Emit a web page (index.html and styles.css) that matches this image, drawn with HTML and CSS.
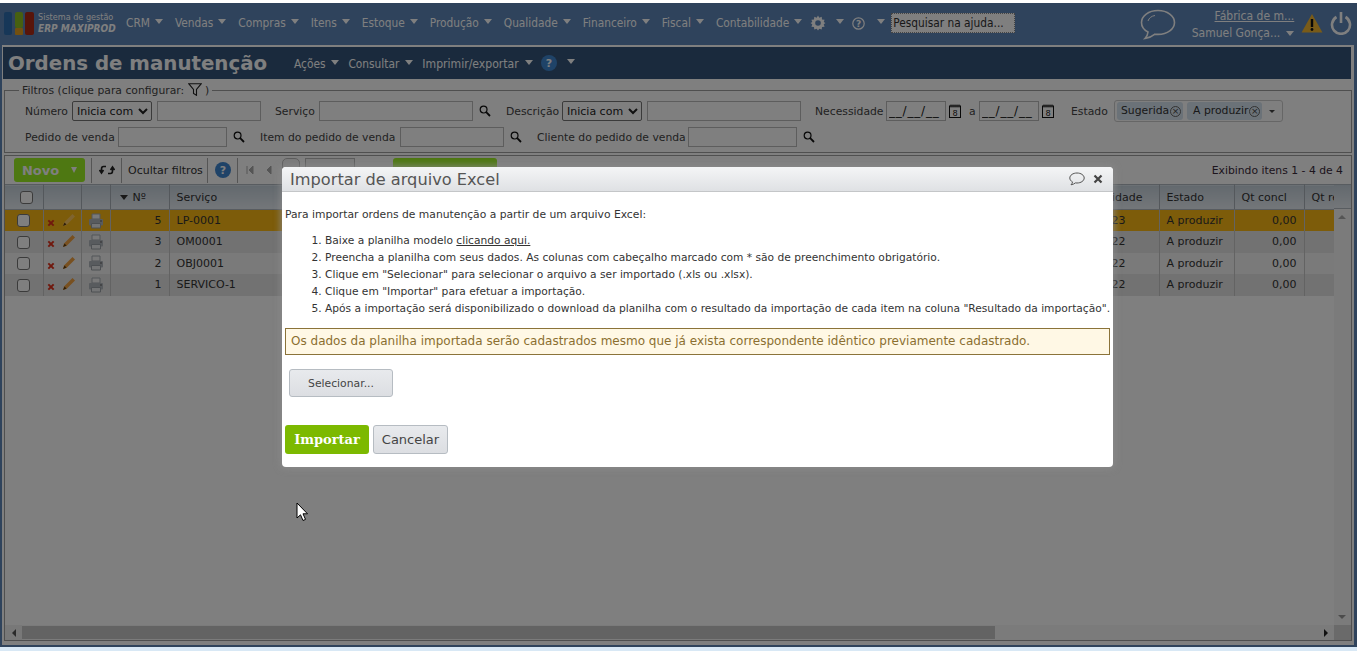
FILE: index.html
```html
<!DOCTYPE html>
<html lang="pt-BR">
<head>
<meta charset="utf-8">
<title>Ordens de manutenção</title>
<link rel="stylesheet" href="styles.css">
</head>
<body>
<svg class="defs" width="0" height="0">
  <defs>
    <symbol id="mag" viewBox="0 0 12 12"><circle cx="4.600" cy="4.600" r="3.400" fill="none" stroke="currentColor" stroke-width="1.200"/><path d="M7.200 7.200 11 11" stroke="currentColor" stroke-width="1.800"/></symbol>
    <symbol id="cal" viewBox="0 0 12 14"><rect x=".5" y="2" width="11" height="11.500" fill="none" stroke="currentColor"/><path d="M2 .5v3M4 .5v3M6 .5v3M8 .5v3M10 .5v3" stroke="currentColor"/><text x="6" y="11.800" font-size="8.500" text-anchor="middle" font-family="Liberation Sans" fill="currentColor">8</text></symbol>
    <symbol id="del" viewBox="0 0 9 9"><path d="M1.500 1.500 7.500 7.500M7.500 1.500 1.500 7.500" stroke="currentColor" stroke-width="2.200"/></symbol>
    <symbol id="pen" viewBox="0 0 14 14"><path d="M1 13 2 9.500 10.500 1 13 3.500 4.500 12Z" fill="currentColor"/><path d="M1 13 2.500 9.500 4.500 11.500Z" fill="#5a3a10"/></symbol>
    <symbol id="print" viewBox="0 0 16 16"><path d="M4 1h8v5H4Z" fill="#f2f2f2" stroke="#a6acb2"/><rect x="1" y="6" width="14" height="6.500" rx="1" fill="#b0b6bc"/><path d="M3.500 10.500h9v4.500h-9Z" fill="#e6e8ea" stroke="#9aa0a6"/><circle cx="13" cy="8" r=".8" fill="#555"/></symbol>
  </defs>
</svg>

<div class="app">
  <header class="topbar">
    <svg class="logo" width="30" height="23" viewBox="0 0 30 23"><rect x="0" y="0" width="8" height="23" rx="2" fill="#2f6fb0"/><rect x="11" y="0" width="8" height="16" rx="2" fill="#8fc020"/><rect x="11" y="16" width="8" height="7" rx="1" fill="#e6a020"/><rect x="21" y="0" width="9" height="23" rx="2" fill="#b02a14"/></svg>
    <div class="brand"><span class="brand-top">Sistema de gestão</span><span class="brand-name">ERP MAXIPROD</span></div>
    <nav class="nav">
      <a class="nav-item">CRM<i class="tri"></i></a>
      <a class="nav-item">Vendas<i class="tri"></i></a>
      <a class="nav-item">Compras<i class="tri"></i></a>
      <a class="nav-item">Itens<i class="tri"></i></a>
      <a class="nav-item">Estoque<i class="tri"></i></a>
      <a class="nav-item">Produção<i class="tri"></i></a>
      <a class="nav-item">Qualidade<i class="tri"></i></a>
      <a class="nav-item">Financeiro<i class="tri"></i></a>
      <a class="nav-item">Fiscal<i class="tri"></i></a>
      <a class="nav-item">Contabilidade<i class="tri"></i></a>
    </nav>
    <svg class="gear" width="16" height="16" viewBox="0 0 16 16"><path d="M8 0.500 9.300 2.700 11.700 1.800 12 4.400 14.600 4.700 13.700 7 15.500 8 13.700 9.300 14.600 11.700 12 12 11.700 14.600 9.300 13.700 8 15.500 6.700 13.700 4.300 14.600 4 12 1.400 11.700 2.300 9.300 0.500 8 2.300 7 1.400 4.700 4 4.400 4.300 1.800 6.700 2.700Z" fill="#fff"/><circle cx="8" cy="8" r="2.800" fill="#5e86b8"/></svg>
    <i class="tri tri-gear"></i>
    <svg class="help" width="13" height="13" viewBox="0 0 13 13"><circle cx="6.500" cy="6.500" r="5.700" fill="none" stroke="#fff" stroke-width="1.200"/><text x="6.500" y="9.800" font-size="9" font-weight="700" text-anchor="middle" font-family="DejaVu Sans" fill="#fff">?</text></svg>
    <i class="tri tri-help"></i>
    <input class="help-search" value="Pesquisar na ajuda..." aria-label="Pesquisar na ajuda">
    <svg class="bubble" width="36" height="31" viewBox="0 0 36 31"><path d="M18 1.500C8.500 1.500 1.500 7 1.500 13.500 1.500 17.500 4 21 8 23 7.800 25.500 6.500 28 5 29.500 9 29 12.500 27.200 15 25.200 16 25.300 17 25.400 18 25.400 27.500 25.400 34.500 20 34.500 13.500 34.500 7 27.500 1.500 18 1.500Z" fill="none" stroke="#fff" stroke-width="1.600"/><path d="M8 12c1-3 3.500-5 7-5.500" fill="none" stroke="#fff"/></svg>
    <div class="user">
      <a class="company">Fábrica de m...</a>
      <span class="user-name">Samuel Gonça...<i class="tri tri-user"></i></span>
    </div>
    <svg class="warn" width="22" height="20" viewBox="0 0 22 20"><path d="M11 1 21.500 19.500H.5Z" fill="#f2b630"/><path d="M11 6v8" stroke="#111" stroke-width="2.400"/><circle cx="11" cy="16.500" r="1.400" fill="#111"/></svg>
    <svg class="power" width="22" height="24" viewBox="0 0 22 24"><path d="M6.500 6A9 9 0 1 0 15.500 6" fill="none" stroke="#fff" stroke-width="2.600"/><path d="M11 1v11" stroke="#fff" stroke-width="2.600"/></svg>
  </header>

  <main class="panel">
    <div class="titlebar">
      <h1 class="page-title">Ordens de manutenção</h1>
      <a class="sub-item">Ações<i class="tri"></i></a>
      <a class="sub-item">Consultar<i class="tri"></i></a>
      <a class="sub-item sub-wide">Imprimir/exportar<i class="tri"></i></a>
      <svg class="round-help" width="16" height="16" viewBox="0 0 16 16"><circle cx="8" cy="8" r="8" fill="#3f86d0"/><text x="8" y="12" font-size="11" font-weight="700" text-anchor="middle" font-family="DejaVu Sans" fill="#fff">?</text></svg>
      <i class="tri tri-sub"></i>
    </div>

    <fieldset class="filters">
      <legend class="filters-legend">Filtros (clique para configurar:
        <svg class="funnel" width="14" height="13" viewBox="0 0 14 13"><path d="M.7.7h12.600L8.500 6.500V12.300L5.500 10.500V6.500Z" fill="none" stroke="#222" stroke-width="1.100"/></svg> )</legend>
      <div class="filter-row">
        <label class="w43">Número</label>
        <select class="sel ml4"><option>Inicia com</option></select>
        <input class="inp w104 ml5">
        <label class="w39 ml14">Serviço</label>
        <input class="inp w154 ml5">
        <svg class="ico-mag ml6"><use href="#mag"/></svg>
        <label class="w52 ml15">Descrição</label>
        <select class="sel ml4"><option>Inicia com</option></select>
        <input class="inp w154 ml5">
        <label class="w66 ml14">Necessidade</label>
        <input class="inp date w60 ml5" value="__/__/__">
        <svg class="ico-cal ml3"><use href="#cal"/></svg>
        <label class="w6 ml8">a</label>
        <input class="inp date w60 ml4" value="__/__/__">
        <svg class="ico-cal ml3"><use href="#cal"/></svg>
        <label class="w37 ml17">Estado</label>
        <div class="multi ml6">
          <span class="chip">Sugerida<i class="chip-x">×</i></span>
          <span class="chip">A produzir<i class="chip-x">×</i></span>
          <i class="tri tri-multi"></i>
        </div>
      </div>
      <div class="filter-row row-two">
        <label class="w89">Pedido de venda</label>
        <input class="inp w109 ml4">
        <svg class="ico-mag ml6"><use href="#mag"/></svg>
        <label class="w135 ml15">Item do pedido de venda</label>
        <input class="inp w104 ml5">
        <svg class="ico-mag ml6"><use href="#mag"/></svg>
        <label class="w147 ml15">Cliente do pedido de venda</label>
        <input class="inp w109 ml4">
        <svg class="ico-mag ml6"><use href="#mag"/></svg>
      </div>
    </fieldset>

    <section class="grid">
      <div class="toolbar">
        <button class="btn-novo">Novo<i class="tri tri-novo"></i></button>
        <span class="tsep s1"></span>
        <svg class="refresh" width="16" height="12" viewBox="0 0 16 12"><path d="M7 2.500H4.500C3 2.500 2.500 3.500 2.500 5V8M.5 6 2.500 9 4.500 6M9 9.500h2.500C13 9.500 13.500 8.500 13.500 7V4M11.500 6l2-3 2 3" fill="none" stroke="#222" stroke-width="1.600"/></svg>
        <span class="tsep s2"></span>
        <span class="hide-filters">Ocultar filtros</span>
        <span class="tsep s3"></span>
        <svg class="round-help-2" width="16" height="16" viewBox="0 0 16 16"><circle cx="8" cy="8" r="8" fill="#3f86d0"/><text x="8" y="12" font-size="11" font-weight="700" text-anchor="middle" font-family="DejaVu Sans" fill="#fff">?</text></svg>
        <span class="tsep s4"></span>
        <svg class="pager" width="27" height="10" viewBox="0 0 27 10"><path d="M1 1v8M7 1 3 5 7 9ZM25 1 21 5 25 9Z" fill="#aaa" stroke="#aaa"/></svg>
        <span class="pager-box"></span>
        <span class="pager-input"></span>
        <span class="gantt"></span>
        <span class="showing">Exibindo itens 1 - 4 de 4</span>
      </div>

      <div class="grid-main">
        <div class="table-wrap">
          <table class="data">
            <colgroup>
              <col class="c-check"><col class="c-act"><col class="c-print"><col class="c-num"><col class="c-serv"><col class="c-need"><col class="c-state"><col class="c-qt"><col class="c-qtr">
            </colgroup>
            <thead>
              <tr>
                <th class="ctr head-check"><span class="cbx"></span></th>
                <th></th>
                <th></th>
                <th class="th-num"><i class="tri tri-sort"></i>Nº</th>
                <th>Serviço</th>
                <th class="need-h">Necessidade</th>
                <th>Estado</th>
                <th>Qt concl</th>
                <th class="clip">Qt realizada</th>
              </tr>
            </thead>
            <tbody>
              <tr class="row-sel">
                <td class="ctr"><span class="cbx"></span></td>
                <td class="acts"><svg class="ico-del"><use href="#del"/></svg><svg class="ico-pen pen-sel"><use href="#pen"/></svg></td>
                <td class="ctr"><svg class="ico-print"><use href="#print"/></svg></td>
                <td class="num">5</td><td>LP-0001</td><td class="need">10/10/2023</td><td>A produzir</td><td class="num">0,00</td><td></td>
              </tr>
              <tr class="row-a">
                <td class="ctr"><span class="cbx"></span></td>
                <td class="acts"><svg class="ico-del"><use href="#del"/></svg><svg class="ico-pen"><use href="#pen"/></svg></td>
                <td class="ctr"><svg class="ico-print"><use href="#print"/></svg></td>
                <td class="num">3</td><td>OM0001</td><td class="need">10/10/2022</td><td>A produzir</td><td class="num">0,00</td><td></td>
              </tr>
              <tr class="row-b">
                <td class="ctr"><span class="cbx"></span></td>
                <td class="acts"><svg class="ico-del"><use href="#del"/></svg><svg class="ico-pen"><use href="#pen"/></svg></td>
                <td class="ctr"><svg class="ico-print"><use href="#print"/></svg></td>
                <td class="num">2</td><td>OBJ0001</td><td class="need">10/10/2022</td><td>A produzir</td><td class="num">0,00</td><td></td>
              </tr>
              <tr class="row-a">
                <td class="ctr"><span class="cbx"></span></td>
                <td class="acts"><svg class="ico-del"><use href="#del"/></svg><svg class="ico-pen"><use href="#pen"/></svg></td>
                <td class="ctr"><svg class="ico-print"><use href="#print"/></svg></td>
                <td class="num">1</td><td>SERVICO-1</td><td class="need">10/10/2022</td><td>A produzir</td><td class="num">0,00</td><td></td>
              </tr>
            </tbody>
          </table>
        </div>
        <div class="vscroll">
          <div class="vscroll-head"></div>
          <div class="vscroll-track"><i class="arr-up"></i><i class="arr-down"></i></div>
        </div>
      </div>

      <div class="hscroll">
        <div class="h-left"><i class="arr-left"></i></div>
        <div class="h-thumb"></div>
        <div class="h-rest"><i class="arr-right"></i></div>
        <div class="h-corner"></div>
      </div>
    </section>
  </main>
</div>
<div class="bottom-strip"></div>

<div class="overlay"></div>

<div class="modal" role="dialog">
  <div class="modal-head">
    <h2 class="modal-title">Importar de arquivo Excel</h2>
    <svg class="modal-chat" width="16" height="14" viewBox="0 0 16 14"><path d="M8 1C4 1 .8 3.200.8 6 .8 7.600 1.800 9 3.500 9.900 3.400 11 2.800 12 2 12.800 3.800 12.600 5.300 11.800 6.400 10.900 6.900 11 7.500 11 8 11 12 11 15.200 8.800 15.200 6 15.200 3.200 12 1 8 1Z" fill="none" stroke="#555" stroke-width="1"/></svg>
    <svg class="modal-close" width="10" height="10" viewBox="0 0 10 10"><path d="M1.500 1.500 8.500 8.500M8.500 1.500 1.500 8.500" stroke="#444" stroke-width="2.200"/></svg>
  </div>
  <div class="modal-body">
    <p class="intro">Para importar ordens de manutenção a partir de um arquivo Excel:</p>
    <ol class="steps">
      <li>Baixe a planilha modelo <a class="link">clicando aqui.</a></li>
      <li>Preencha a planilha com seus dados. As colunas com cabeçalho marcado com * são de preenchimento obrigatório.</li>
      <li>Clique em "Selecionar" para selecionar o arquivo a ser importado (.xls ou .xlsx).</li>
      <li>Clique em "Importar" para efetuar a importação.</li>
      <li>Após a importação será disponibilizado o download da planilha com o resultado da importação de cada item na coluna "Resultado da importação".</li>
    </ol>
    <div class="notice">Os dados da planilha importada serão cadastrados mesmo que já exista correspondente idêntico previamente cadastrado.</div>
    <button class="btn-select">Selecionar...</button>
    <div class="modal-actions">
      <button class="btn-import">Importar</button>
      <button class="btn-cancel">Cancelar</button>
    </div>
  </div>
</div>

<svg class="cursor" width="13" height="20" viewBox="0 0 13 20"><path d="M1 1V16L4.500 12.800 7 18.500 9.500 17.400 7 11.800H11.500Z" fill="#fff" stroke="#000" stroke-width="1"/></svg>
</body>
</html>
```

FILE: styles.css
```css
* { box-sizing: border-box; }
html, body { margin: 0; padding: 0; height: 651px; overflow: hidden; }
body { background: #fff; font-family: "DejaVu Sans", sans-serif; font-size: 10.800px; color: #444; position: relative; }
.defs { position: absolute; }
i { font-style: normal; }

.app { margin-top: 3px; height: 644px; background: #5e86b8; display: flex; flex-direction: column; }
.bottom-strip { height: 4px; background: #d8e8f5; }
.overlay { position: absolute; left: 0; top: 3px; width: 1357px; height: 644px; background: rgba(0,0,0,.5); }

.tri { display: inline-block; width: 0; height: 0; border-left: 4px solid transparent; border-right: 4px solid transparent; border-top: 5px solid #fff; }

/* top bar */
.topbar { height: 42px; flex: none; display: flex; align-items: center; color: #fff; padding-bottom: 2px; }
.logo { margin-left: 4px; flex: none; }
.brand { margin-left: 4px; width: 88px; display: flex; flex-direction: column; font-family: "DejaVu Sans Condensed", "DejaVu Sans", sans-serif; }
.brand-top { font-size: 9px; line-height: 11px; }
.brand-name { font-size: 10px; line-height: 12px; font-style: italic; font-weight: 700; }
.nav { display: flex; }
.nav-item { display: flex; align-items: center; font-size: 11.800px; font-family: "DejaVu Sans Condensed", "DejaVu Sans", sans-serif; margin-right: 6px; white-space: nowrap; }
.nav-item .tri { margin: 0 6px 3px 5px; }
.gear { margin-left: -4px; flex: none; }
.tri-gear { margin: 0 0 4px 10px; }
.help { margin-left: 8px; flex: none; }
.tri-help { margin: 0 0 4px 12px; }
.help-search { margin-left: 6px; width: 124px; height: 20px; flex: none; background: #fff; border: 1px dotted #888; padding: 0 1px; font: 11.800px "DejaVu Sans Condensed", "DejaVu Sans", sans-serif; color: #333; }
.bubble { margin: 2px 0 0 125px; flex: none; }
.user { width: 103px; margin-left: 15px; flex: none; display: flex; flex-direction: column; align-items: flex-end; font-size: 12px; font-family: "DejaVu Sans Condensed", "DejaVu Sans", sans-serif; line-height: 17px; margin-top: 3px; }
.company { text-decoration: underline; }
.user-name { display: flex; align-items: center; white-space: nowrap; }
.tri-user { margin-left: 6px; }
.warn { margin-left: 7px; flex: none; }
.power { margin-left: 7px; flex: none; }

/* panel */
.panel { flex: 1; margin: 0 3px 2px 2px; padding: 2px 3px 0 1px; background: #fff; display: flex; flex-direction: column; min-height: 0; }
.titlebar { height: 32px; flex: none; background: #34547a; display: flex; align-items: center; color: #fff; }
.page-title { margin: 0 25px 0 5px; width: 261px; font: 700 19.800px "DejaVu Sans", sans-serif; white-space: nowrap; }
.sub-item { display: flex; align-items: center; font: 11.800px "DejaVu Sans Condensed", "DejaVu Sans", sans-serif; white-space: nowrap; padding-top: 1px; }
.sub-item .tri { margin: 0 9px 3px 6px; }
.sub-wide { font-size: 12.100px; }
.round-help { margin-left: -1px; flex: none; }
.tri-sub { margin: 0 0 3px 10px; }

.filters { margin: 4px -1px 0 1px; padding: 0 0 0 20px; height: 70px; border: 1px solid #9f9f9f; flex: none; min-width: 0; }
.filters-legend { margin-left: -6px; padding: 0 3px; font-size: 10.800px; line-height: 13px; color: #444; }
.funnel { vertical-align: -2px; }
.filter-row { display: flex; align-items: center; height: 20px; margin-top: 4px; white-space: nowrap; color: #444; }
.row-two { margin-top: 6px; }
.filter-row label { flex: none; }
.inp { height: 20px; border: 1px solid #bbb; background: #fff; flex: none; padding: 0 2px; font: 11px "DejaVu Sans", sans-serif; color: #222; }
.date { font-size: 12px; letter-spacing: .8px; }
.sel { width: 80px; height: 20px; border: 1px solid #777; border-radius: 2px; background: #fff; flex: none; font: 11px "DejaVu Sans", sans-serif; color: #222; padding: 0; }
.ico-mag { width: 12px; height: 12px; flex: none; color: #111; }
.ico-cal { width: 12px; height: 14px; flex: none; color: #111; }
.w6 { width: 6px; } .w37 { width: 37px; } .w39 { width: 39px; } .w43 { width: 43px; } .w52 { width: 52px; }
.w60 { width: 60px; } .w66 { width: 66px; } .w89 { width: 89px; } .w104 { width: 104px; } .w109 { width: 109px; }
.w135 { width: 135px; } .w147 { width: 147px; } .w154 { width: 154px; }
.ml3 { margin-left: 3px; } .ml4 { margin-left: 4px; } .ml5 { margin-left: 5px; } .ml6 { margin-left: 6px; } .ml8 { margin-left: 8px; }
.ml14 { margin-left: 14px; } .ml15 { margin-left: 15px; } .ml17 { margin-left: 17px; }
.multi { width: 169px; height: 22px; border: 1px solid #ccc; border-radius: 3px; background: #fff; display: flex; align-items: center; padding-left: 2px; gap: 4px; flex: none; }
.chip { background: #d6e4f0; border-radius: 3px; height: 18px; line-height: 18px; padding: 0 2px 0 4px; color: #333; display: flex; align-items: center; gap: 1px; }
.chip + .chip { padding-left: 6px; }
.chip-x { width: 11px; height: 11px; border: 1px solid #666; border-radius: 50%; font-size: 9px; line-height: 9px; text-align: center; color: #444; }
.tri-multi { border-top-color: #444; margin-left: 3px; border-left-width: 3px; border-right-width: 3px; border-top-width: 3px; }

/* grid */
.grid { margin: 2px -1px 0 1px; height: 486px; border: 1px solid #9f9f9f; display: flex; flex-direction: column; flex: none; background: #fff; }
.toolbar { height: 28px; flex: none; display: flex; align-items: center; color: #333; }
.btn-novo { margin-left: 9px; width: 71px; height: 24px; background: #9cf024; border: 0; border-radius: 3px; font: 700 13px "DejaVu Sans", sans-serif; color: #fff; display: flex; align-items: center; justify-content: center; gap: 12px; padding: 0; }
.tri-novo { border-left-width: 3px; border-right-width: 3px; border-top-width: 6px; }
.tsep { width: 1px; height: 25px; background: #aaa; flex: none; }
.s1 { margin-left: 6px; }
.refresh { margin-left: 7px; flex: none; }
.s2 { margin-left: 6px; }
.hide-filters { margin-left: 6px; width: 79px; white-space: nowrap; font-size: 11px; }
.s3 { margin-left: 0; }
.round-help-2 { margin-left: 7px; flex: none; }
.s4 { margin-left: 6px; }
.pager { margin-left: 8px; flex: none; }
.pager-box { margin-left: 9px; width: 18px; height: 24px; border: 1px solid #bbb; border-radius: 5px; background: #f4f4f4; }
.pager-input { margin-left: 5px; width: 50px; height: 24px; border: 1px solid #bbb; background: #f4f4f4; }
.gantt { margin-left: 38px; width: 104px; height: 24px; background: #9cf024; border-radius: 3px; }
.showing { margin-left: auto; margin-right: 8px; color: #3a2a3a; }

.grid-main { flex: 1; min-height: 0; display: flex; }
.table-wrap { width: 1329px; flex: none; overflow: hidden; }
.data { width: 1329px; table-layout: fixed; border-collapse: collapse; font-size: 11px; color: #333; }
.c-check { width: 38px; } .c-act { width: 38px; } .c-print { width: 29px; } .c-num { width: 59px; } .c-serv { width: 881px; }
.c-need { width: 109px; } .c-state { width: 75px; } .c-qt { width: 70px; } .c-qtr { width: 30px; }
.data th { height: 25px; padding: 0 0 0 7px; font-weight: 400; text-align: left; background: linear-gradient(#c6d2dc, #e8eef4); border-right: 1px solid #a8b0b8; border-top: 1px solid #b0b8c0; border-bottom: 1px solid #b0b8c0; white-space: nowrap; overflow: hidden; }
.data td { height: 21.500px; padding: 0 0 0 7px; border-right: 1px solid #c6c6c6; white-space: nowrap; overflow: hidden; }
.data .ctr { text-align: center; padding: 0; }
.data .head-check { padding-left: 6px; }
.data .num { text-align: right; padding: 0 7px 0 0; }
.data .th-num { padding-left: 9px; }
.tri-sort { border-top-color: #333; margin-right: 5px; vertical-align: 1px; }
.data .need-h { text-align: right; padding-right: 16px; }
.data .need { text-align: right; padding-right: 33px; }
.row-sel td { background: #fab814; }
.row-a td { background: #e4e4e4; }
.row-b td { background: #f4f4f4; }
.cbx { display: inline-block; width: 13px; height: 13px; border: 1px solid #777; border-radius: 3px; background: #fff; vertical-align: middle; }
.data .acts { padding-left: 3px; }
.ico-del { width: 8px; height: 8px; color: #e0301a; vertical-align: -2px; }
.ico-pen { width: 14px; height: 14px; margin-left: 7px; color: #f0a040; vertical-align: -2px; }
.pen-sel { color: #ffc860; }
.ico-print { width: 16px; height: 16px; vertical-align: middle; }

.vscroll { width: 17px; flex: none; display: flex; flex-direction: column; }
.vscroll-head { height: 25px; flex: none; background: linear-gradient(#c6d2dc, #e8eef4); border-top: 1px solid #b0b8c0; border-bottom: 1px solid #b0b8c0; }
.vscroll-track { flex: 1; background: #f6f6f6; position: relative; }
.arr-up, .arr-down { position: absolute; left: 4px; width: 0; height: 0; border-left: 4px solid transparent; border-right: 4px solid transparent; }
.arr-up { top: 6px; border-bottom: 4px solid #aaa; }
.arr-down { bottom: 6px; border-top: 4px solid #999; }

.hscroll { height: 15px; flex: none; display: flex; background: #f6f6f6; }
.h-left { width: 17px; display: flex; align-items: center; justify-content: center; background: #f0f0f0; }
.h-thumb { width: 973px; background: #c6c6c6; margin: 1px 0; }
.h-rest { flex: 1; display: flex; align-items: center; justify-content: flex-end; padding-right: 6px; }
.arr-left { width: 0; height: 0; border-top: 4px solid transparent; border-bottom: 4px solid transparent; border-right: 4px solid #555; }
.arr-right { width: 0; height: 0; border-top: 4px solid transparent; border-bottom: 4px solid transparent; border-left: 4px solid #222; }
.h-corner { width: 17px; background: #d4d4d4; }

/* modal */
.modal { position: absolute; left: 282px; top: 167px; width: 831px; height: 300px; background: #fff; border-radius: 4px; box-shadow: 0 0 6px 2px rgba(140,140,140,.7); display: flex; flex-direction: column; }
.modal-head { height: 25px; flex: none; display: flex; align-items: center; background: linear-gradient(#f4f5f6, #dfe1e4); border-bottom: 1px solid #c4c6c8; border-radius: 4px 4px 0 0; padding: 0 10px 0 8px; }
.modal-title { margin: 0; font: 400 16.200px "DejaVu Sans", sans-serif; color: #555; flex: 1; white-space: nowrap; }
.modal-close { margin-left: 8px; }
.modal-body { flex: 1; padding: 0 3px; font-size: 10.700px; color: #333; display: flex; flex-direction: column; align-items: flex-start; }
.intro { margin: 16px 0 0; line-height: 14px; font-size: 10.750px; }
.steps { margin: 10px 0 0; padding: 0 0 0 40px; line-height: 17px; white-space: nowrap; font-size: 10.670px; }
.link { text-decoration: underline; }
.notice { margin-top: 11px; width: 825px; height: 27px; line-height: 25px; padding-left: 5px; border: 1px solid #8b7339; background: #fff8e5; color: #8b6f30; font-size: 12px; white-space: nowrap; }
.btn-select { margin: 14px 0 0 4px; width: 104px; height: 28px; flex: none; border: 1px solid #b6bcc2; border-radius: 3px; background: linear-gradient(#e8eaed, #dcdee2); font: 10.800px "DejaVu Sans", sans-serif; color: #444; padding: 0; }
.modal-actions { margin-top: 28px; display: flex; gap: 4px; }
.btn-import { width: 84px; height: 29px; background: #7cb900; border: 0; border-radius: 3px; font: 700 13px "DejaVu Serif", serif; color: #fff; padding: 0; }
.btn-cancel { width: 75px; height: 29px; border: 1px solid #b6bcc2; border-radius: 3px; background: linear-gradient(#e8eaed, #dcdee2); font: 13px "DejaVu Sans", sans-serif; color: #444; padding: 0; }

.cursor { position: absolute; left: 296px; top: 502px; }
```
